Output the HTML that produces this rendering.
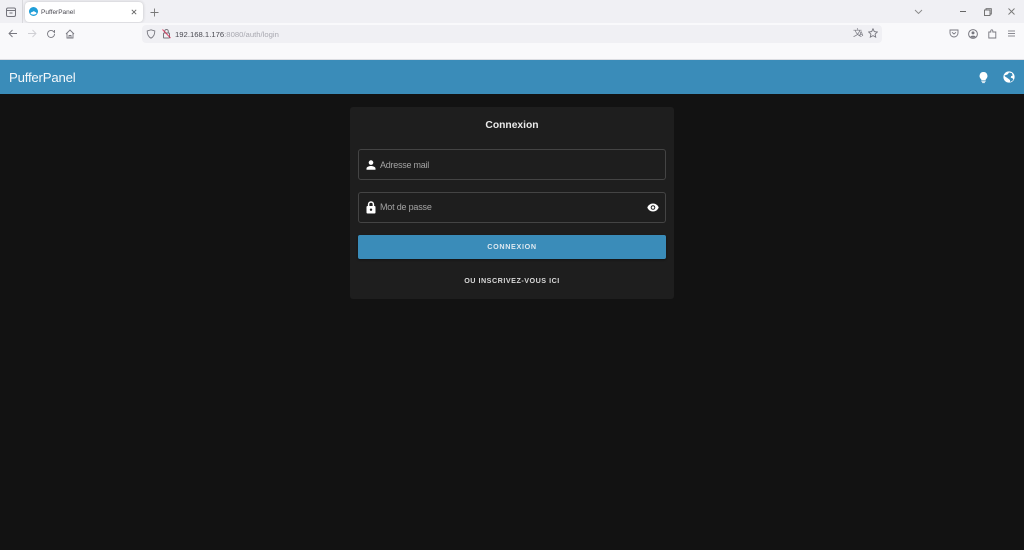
<!DOCTYPE html>
<html lang="fr">
<head>
<meta charset="utf-8">
<title>PufferPanel</title>
<style>
html,body{margin:0;padding:0;width:1024px;height:550px;overflow:hidden;background:#121212;font-family:"Liberation Sans",sans-serif}
div,svg,span{position:absolute;box-sizing:border-box}
span,.t{white-space:nowrap}
</style>
</head>
<body>
<!-- tab strip -->
<div style="left:0;top:0;width:1024px;height:23px;background:#f0f0f4"></div>
<div style="left:22px;top:0;width:1px;height:23px;background:#d9d9dd"></div>
<svg style="left:5px;top:6px" width="12" height="12" viewBox="0 0 12 12" fill="none" stroke="#74747c" stroke-width="1"><rect x="1.500" y="2" width="9" height="8.500" rx="1.500"/><path d="M1.500 4.500h9M4.500 7h3"/></svg>
<div style="left:25px;top:2px;width:118px;height:20px;background:#fff;border-radius:4px;box-shadow:0 0 3px rgba(0,0,0,.2)"></div>
<svg style="left:29px;top:7px" width="9" height="9" viewBox="0 0 9 9"><circle cx="4.500" cy="4.500" r="4.500" fill="#1f9ed8"/><path d="M1.500 6.500c.5-1.500 1.500-1.500 2-1.500.5-1 2-1 2.500 0 1 0 1.500.7 1.500 1.500-1.500 1.500-4.500 1.500-6 0z" fill="#fff"/></svg>
<span style="left:41px;top:7.500px;font-size:6.500px;line-height:9px;color:#4a4a52">PufferPanel</span>
<svg style="left:131px;top:9px" width="6" height="6" viewBox="0 0 6 6" stroke="#666" stroke-width=".9"><path d="M.8.800l4.400 4.400M5.200.800L.8 5.200"/></svg>
<svg style="left:150px;top:8px" width="9" height="9" viewBox="0 0 9 9" stroke="#777" stroke-width=".9"><path d="M4.500.5v8M.5 4.500h8"/></svg>
<svg style="left:914px;top:9px" width="9" height="6" viewBox="0 0 9 6" fill="none" stroke="#888" stroke-width=".9"><path d="M1 1l3.500 3.500L8 1"/></svg>
<div style="left:960px;top:11px;width:6px;height:1px;background:#666"></div>
<svg style="left:984px;top:8px" width="8" height="8" viewBox="0 0 8 8" fill="none" stroke="#666" stroke-width=".9"><rect x=".5" y="2" width="5.500" height="5.500"/><path d="M2 2V.7h5.300V6H6"/></svg>
<svg style="left:1008px;top:8px" width="7" height="7" viewBox="0 0 7 7" stroke="#777" stroke-width=".9"><path d="M.5.500l6 6M6.500.500l-6 6"/></svg>
<!-- toolbar -->
<div style="left:0;top:23px;width:1024px;height:20px;background:#f9f9fb"></div>
<svg style="left:8px;top:29px" width="10" height="9" viewBox="0 0 10 9" fill="none" stroke="#77777f" stroke-width=".9"><path d="M9 4.500H1M4.500 1L1 4.500 4.500 8"/></svg>
<svg style="left:27px;top:29px" width="10" height="9" viewBox="0 0 10 9" fill="none" stroke="#cfcfd4" stroke-width=".9"><path d="M1 4.500h8M5.500 1L9 4.500 5.500 8"/></svg>
<svg style="left:46px;top:29px" width="10" height="10" viewBox="0 0 10 10" fill="none" stroke="#77777f" stroke-width=".9"><path d="M8.500 5a3.500 3.500 0 1 1-1-2.500L8.500 3.500V1"/></svg>
<svg style="left:65px;top:29px" width="10" height="10" viewBox="0 0 10 10" fill="none" stroke="#77777f" stroke-width=".9"><path d="M1 5l4-4 4 4M2 4v5h6V4M4 9V6.500h2V9"/></svg>
<div style="left:142px;top:25px;width:740px;height:18px;background:#f0f0f4;border-radius:4px"></div>
<svg style="left:146px;top:29px" width="10" height="10" viewBox="0 0 10 10" fill="none" stroke="#77777f" stroke-width=".9"><path d="M5 .8l3.800 1.200c0 3.500-1 5.800-3.800 7.200C2.200 7.800 1.200 5.500 1.200 2z"/></svg>
<svg style="left:161px;top:28px" width="11" height="11" viewBox="0 0 11 11" fill="none"><rect x="2.500" y="5" width="6" height="5" rx=".8" stroke="#77777f"/><path d="M3.700 5V3.300a1.800 1.800 0 0 1 3.600 0V5" stroke="#77777f"/><path d="M1.500 1.500l8 8.500" stroke="#d7264f" stroke-opacity=".8"/></svg>
<span style="left:175px;top:28.500px;font-size:7.700px;line-height:11px;color:#4a4a52">192.168.1.176<span style="position:static;color:#a8a8b0">:8080/auth/login</span></span>
<span style="left:853px;top:28px;font-size:9px;line-height:11px;color:#77777f;font-family:'Liberation Sans','Noto Sans CJK SC',sans-serif">文<span style="position:absolute;left:6px;top:2px;font-size:6px;font-weight:bold">A</span></span>
<svg style="left:868px;top:28px" width="10" height="10" viewBox="0 0 10 10" fill="none" stroke="#77777f" stroke-width=".9"><path d="M5 .8l1.300 2.800 3 .4-2.200 2.100.6 3L5 7.600 2.300 9.100l.6-3L.7 4l3-.4z"/></svg>
<svg style="left:949px;top:29px" width="10" height="9" viewBox="0 0 10 9" fill="none" stroke="#77777f" stroke-width=".9"><path d="M1 1h8v3a4 4 0 0 1-8 0zM3 3.300l2 1.700 2-1.700"/></svg>
<svg style="left:968px;top:29px" width="10" height="10" viewBox="0 0 10 10"><circle cx="5" cy="5" r="4.400" fill="none" stroke="#77777f"/><circle cx="5" cy="3.900" r="1.500" fill="#77777f"/><path d="M2.300 7.800c.6-1.500 4.800-1.500 5.400 0-1.500 1.300-3.900 1.300-5.400 0z" fill="#77777f"/></svg>
<svg style="left:988px;top:29px" width="9" height="10" viewBox="0 0 9 10" fill="none" stroke="#77777f" stroke-width=".9"><path d="M.8 3h2V1.800a1 1 0 0 1 2 0V3h3v6H.8z"/></svg>
<svg style="left:1008px;top:30px" width="7" height="7" viewBox="0 0 7 7" stroke="#8a8a92" stroke-width="1"><path d="M0 1h7M0 3.500h7M0 6h7"/></svg>
<!-- page top blank -->
<div style="left:0;top:43px;width:1024px;height:17px;background:#f9f9fb"></div>
<div style="left:0;top:59px;width:1024px;height:1px;background:#dcdde2"></div>
<!-- app bar -->
<div style="left:0;top:60px;width:1024px;height:34px;background:#3a8cb9"></div>
<span style="left:9px;top:70px;font-size:13.200px;letter-spacing:-.2px;line-height:16px;color:#f4f8fb">PufferPanel</span>
<svg style="left:978px;top:71px" width="11" height="13" viewBox="0 0 12 13"><path d="M6 .5a4.300 4.300 0 0 0-2.500 7.800V9.500h5V8.300A4.300 4.300 0 0 0 6 .5z" fill="#fff"/><rect x="3.700" y="10.100" width="4.600" height="1" fill="#fff"/><rect x="4.500" y="11.600" width="3" height="1" fill="#fff"/></svg>
<svg style="left:1003px;top:71px" width="12" height="12" viewBox="0 0 12 12"><circle cx="6" cy="6" r="5.600" fill="#fff"/><path d="M6 1.500l2.800.6.900 2.400-1.500.6-.5 1.500 1.800.6.900 1.300C9.400 9.900 8 10.800 7 10.900V9L5.700 8 4 6.700 2.200 5.600 1.400 4.500 3 4l1.800-.7z" fill="#3a8cb9"/></svg>
<!-- card -->
<div style="left:350px;top:107px;width:324px;height:192px;background:#1e1e1e;border-radius:3px"></div>
<span style="left:350px;width:324px;text-align:center;top:118.500px;font-size:10.300px;line-height:13px;font-weight:bold;color:#eaeaea">Connexion</span>
<div style="left:358px;top:149px;width:308px;height:31px;border:1px solid #444;border-radius:3px"></div>
<svg style="left:366px;top:160px" width="10" height="10" viewBox="0 0 10 10"><circle cx="5" cy="2.600" r="2.300" fill="#fff"/><path d="M.5 9.800V8.500C.5 6.800 3.300 6 5 6s4.500.8 4.500 2.500v1.300z" fill="#fff"/></svg>
<span style="left:380px;top:158.500px;font-size:9px;letter-spacing:-.25px;line-height:12px;color:#a3a3a3">Adresse mail</span>
<div style="left:358px;top:192px;width:308px;height:31px;border:1px solid #444;border-radius:3px"></div>
<svg style="left:366px;top:201px" width="10" height="13" viewBox="0 0 10 13"><path d="M2.600 5.500V3.400a2.400 2.400 0 0 1 4.800 0v2.100" fill="none" stroke="#fff" stroke-width="1.500"/><rect x=".5" y="5" width="9" height="7.500" rx="1" fill="#fff"/><circle cx="5" cy="8.700" r="1.200" fill="#1e1e1e"/></svg>
<span style="left:380px;top:201px;font-size:9px;letter-spacing:-.2px;line-height:12px;color:#a3a3a3">Mot de passe</span>
<svg style="left:647px;top:203px" width="12" height="9" viewBox="0 0 12 9"><path d="M6 .5C3.500.5 1.300 2 .3 4.500 1.300 7 3.500 8.500 6 8.500s4.700-1.500 5.700-4C10.700 2 8.500.5 6 .5z" fill="#fff"/><circle cx="6" cy="4.500" r="2.300" fill="#1e1e1e"/><circle cx="6" cy="4.500" r="1.300" fill="#fff"/></svg>
<div style="left:358px;top:235px;width:308px;height:24px;background:#3a8cb9;border-radius:2px;box-shadow:0 1px 2px rgba(0,0,0,.4)"></div>
<span style="left:358px;width:308px;text-align:center;top:241.500px;font-size:7.200px;line-height:10px;font-weight:bold;letter-spacing:.65px;color:#dfe9f0">CONNEXION</span>
<span style="left:358px;width:308px;text-align:center;top:276px;font-size:7.200px;line-height:10px;font-weight:bold;letter-spacing:.5px;color:#d8d8d8">OU INSCRIVEZ-VOUS ICI</span>
</body>
</html>
